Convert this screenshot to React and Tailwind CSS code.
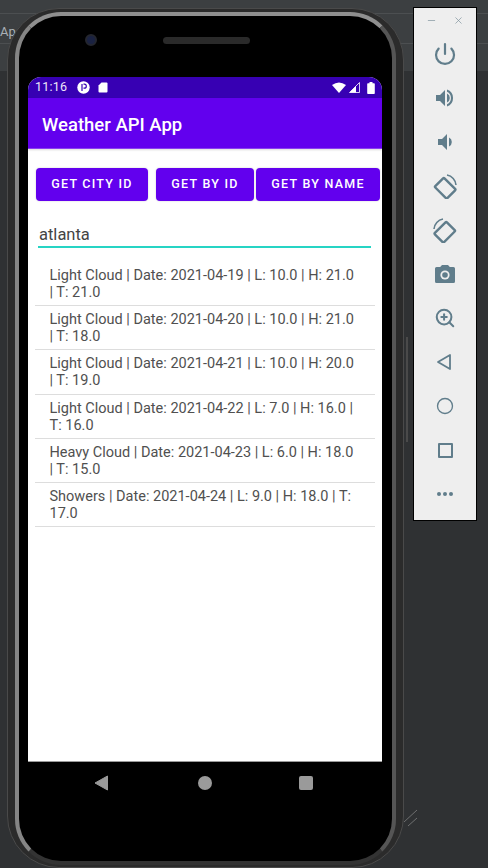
import { Power, Circle, ZoomIn, Minus, X } from 'lucide-react';

const forecast = [
  'Light Cloud | Date: 2021-04-19 | L: 10.0 | H: 21.0 | T: 21.0',
  'Light Cloud | Date: 2021-04-20 | L: 10.0 | H: 21.0 | T: 18.0',
  'Light Cloud | Date: 2021-04-21 | L: 10.0 | H: 20.0 | T: 19.0',
  'Light Cloud | Date: 2021-04-22 | L: 7.0 | H: 16.0 | T: 16.0',
  'Heavy Cloud | Date: 2021-04-23 | L: 6.0 | H: 18.0 | T: 15.0',
  'Showers | Date: 2021-04-24 | L: 9.0 | H: 18.0 | T: 17.0',
];

function RotateIcon({ flip }) {
  return (
    <svg width="26" height="26" viewBox="0 0 26 26" fill="none" stroke="#607d8b" className={flip ? '-scale-x-100' : ''}>
      <rect x="6" y="7" width="13" height="17" rx="1" strokeWidth="2.4" transform="rotate(-45 12.5 14.5)" />
      <path d="M15 2 A11 11 0 0 1 24 12" strokeWidth="1.6" />
    </svg>
  );
}

function ToolBar() {
  const icon = 'text-[#607d8b]';
  return (
    <div className="absolute left-[413px] top-[7px] w-[64px] h-[514px] bg-[#eeeeee] border border-black flex flex-col items-center">
      <div className="flex items-center justify-center gap-[16px] h-[24px] text-[#7d929c]">
        <Minus size={11} strokeWidth={1.5} />
        <X size={11} strokeWidth={1.5} />
      </div>
      <div className="flex flex-col items-center">
        <div className="h-[44px] w-full flex items-center justify-center"><Power size={24} strokeWidth={2.2} className={icon} /></div>
        <div className="h-[44px] w-full flex items-center justify-center">
          <svg width="24" height="24" viewBox="0 0 24 24" fill="#607d8b"><path d="M3 9v6h4l5 5V4L7 9H3z" /><path d="M14 7.5a5 5 0 0 1 0 9z" /><path d="M14 3.5v2.2a7 7 0 0 1 0 12.6v2.2a9 9 0 0 0 0-17z" /></svg>
        </div>
        <div className="h-[44px] w-full flex items-center justify-center">
          <svg width="24" height="24" viewBox="0 0 24 24" fill="#607d8b"><path d="M5 9v6h4l5 5V4L9 9H5z" /><path d="M16 7.5a5 5 0 0 1 0 9z" /></svg>
        </div>
        <div className="h-[44px] w-full flex items-center justify-center"><RotateIcon /></div>
        <div className="h-[44px] w-full flex items-center justify-center"><RotateIcon flip /></div>
        <div className="h-[44px] w-full flex items-center justify-center">
          <svg width="24" height="24" viewBox="0 0 24 24"><path fill="#607d8b" d="M9 3 7.2 5H3.500A1.500 1.500 0 0 0 2 6.500v13A1.500 1.500 0 0 0 3.500 21h17a1.500 1.500 0 0 0 1.500-1.500v-13A1.500 1.500 0 0 0 20.500 5h-3.700L15 3H9z" /><circle cx="12" cy="13" r="4.600" fill="#eeeeee" /><circle cx="12" cy="13" r="2.800" fill="#607d8b" /></svg>
        </div>
        <div className="h-[44px] w-full flex items-center justify-center"><ZoomIn size={22} strokeWidth={2.2} className={icon} /></div>
        <div className="h-[44px] w-full flex items-center justify-center">
          <svg width="20" height="20" viewBox="0 0 20 20" fill="none" stroke="#607d8b" strokeWidth="1.800" strokeLinejoin="round"><path d="M15 3v14L3 10z" /></svg>
        </div>
        <div className="h-[44px] w-full flex items-center justify-center"><Circle size={18} strokeWidth={1.800} className={icon} /></div>
        <div className="h-[44px] w-full flex items-center justify-center">
          <div className="w-[15px] h-[15px] border-2 border-[#607d8b] rounded-[1px]" />
        </div>
        <div className="h-[44px] w-full flex items-center justify-center gap-[2px]">
          <span className="w-[4px] h-[4px] rounded-full bg-[#607d8b]" />
          <span className="w-[4px] h-[4px] rounded-full bg-[#607d8b]" />
          <span className="w-[4px] h-[4px] rounded-full bg-[#607d8b]" />
        </div>
      </div>
    </div>
  );
}

function StatusBar() {
  return (
    <div className="h-[21px] bg-[#3700b3] flex items-center pl-[7px] pr-[7px] text-white">
      <span className="w-[31px] text-[12.500px] tracking-[0.2px] text-[#eee6fa] whitespace-nowrap">11:16</span>
      <svg width="13" height="13" viewBox="0 0 13 13" className="ml-[11px]">
        <circle cx="6.500" cy="6.500" r="6.200" fill="white" />
        <path d="M5 3v7M6.500 3.200h.8a2 2 0 0 1 0 4H6.500" fill="none" stroke="#3700b3" strokeWidth="1.200" />
      </svg>
      <svg width="10" height="11" viewBox="0 0 10 11" className="ml-[8px]">
        <path d="M3.500 0.500H8.500A1 1 0 0 1 9.500 1.500V9.500A1 1 0 0 1 8.500 10.500H1.500A1 1 0 0 1 0.500 9.500V3.500z" fill="white" />
      </svg>
      <div className="ml-auto flex items-center gap-[2px]">
        <svg width="14" height="11" viewBox="0 0 14 11"><path d="M0 3 Q7 -2 14 3 L7 11z" fill="white" /></svg>
        <svg width="11" height="11" viewBox="0 0 11 11" className="ml-[1px]">
          <path d="M0.500 10.500 10.500 0.500V10.500z" fill="none" stroke="white" strokeWidth="0.800" />
          <path d="M0.500 10.500 7 4V10.500z" fill="white" />
        </svg>
        <svg width="8" height="12" viewBox="0 0 8 12" className="ml-[5px]"><path d="M2.500 0h3v1.200H7a.8.8 0 0 1 .8.8v9.200a.8.8 0 0 1-.8.8H1a.8.8 0 0 1-.8-.8V2a.8.8 0 0 1 .8-.8h1.500z" fill="white" /></svg>
      </div>
    </div>
  );
}

function ActionButton({ className, children }) {
  return (
    <button className={`h-[33px] rounded-[4px] bg-[#6200ee] text-white text-[12.500px] font-medium tracking-[1.250px] flex items-center justify-center shadow-[0_0_2px_rgba(0,0,0,0.2)] ${className}`}>
      {children}
    </button>
  );
}

function Screen() {
  return (
    <div className="h-[685px] bg-white rounded-t-[13px] overflow-hidden flex flex-col border-b border-[#9a9a9a]">
      <StatusBar />
      <div className="h-[51px] bg-[#6200ee] flex items-center pl-[14px] pt-[5px] border-b border-[#8a3ff0] shadow-[0_1px_2px_rgba(0,0,0,0.15)]">
        <span className="text-white text-[18.500px] font-medium">Weather API App</span>
      </div>
      <div className="flex mt-[19px] pl-[8px]">
        <ActionButton className="w-[112px]">GET CITY ID</ActionButton>
        <ActionButton className="w-[98px] ml-[8px]">GET BY ID</ActionButton>
        <ActionButton className="w-[124px] ml-[2px]">GET BY NAME</ActionButton>
      </div>
      <div className="mt-[22px] ml-[10px] w-[333px] h-[25px] border-b-2 border-[#26d4c4] pl-[1px] text-[16.500px] text-[#444444] leading-[24px]">atlanta</div>
      <div className="mt-[14px] mx-[7px] flex flex-col">
        {forecast.map((row) => (
          <div key={row} className="h-[44.200px] border-b border-[#dddddd] pl-[14.500px] pr-[18px] pt-[5px] text-[14.500px] leading-[17px] text-[#505050]">
            {row}
          </div>
        ))}
      </div>
    </div>
  );
}

export default function App() {
  return (
    <div className="relative w-[488px] h-[868px] overflow-hidden bg-[#2f3133] [font-family:Roboto,sans-serif]">
      <div className="h-[43px] bg-[#3c3f41]">
        <div className="h-[14px] border-b border-[#4c4f51]" />
        <div className="pt-[8px] text-[13px] text-[#a9b0b5]">Ap</div>
      </div>
      <div className="h-[28px] bg-[#3c3f41] border-t border-[#4c4f51]" />

      {/* phone body */}
      <div className="absolute left-[7px] top-[8px] w-[397px] h-[860px] rounded-[52px] bg-[#2b2b2b] border border-[#4a4a4a] pl-[7px] pr-[7px] pt-[3px] pb-[2px]">
        <div className="h-full rounded-[46px] border-4 border-l-[#858585] border-r-[#555555] border-t-[#8f8f8f] border-b-[#333333] bg-black">
          <div className="relative h-[61px]">
            <span className="absolute left-[66px] top-[18px] w-[12px] h-[12px] rounded-full bg-[#1a2242] border-2 border-[#24262e]" />
            <span className="absolute left-[144px] top-[21px] w-[87px] h-[7px] rounded-full bg-[#2a2a2a]" />
          </div>
          <div className="ml-[9px] mr-[10px]">
            <Screen />
          </div>
          <div className="h-[40px] flex items-center pl-[75px] pt-[2px]">
            <svg width="14" height="16" viewBox="0 0 14 16"><path d="M13.500 1v14L1 8z" fill="#9a9a9a" stroke="#9a9a9a" strokeLinejoin="round" /></svg>
            <span className="ml-[90px] w-[14px] h-[14px] rounded-full bg-[#9a9a9a]" />
            <span className="ml-[87px] w-[14px] h-[14px] rounded-[2px] bg-[#9a9a9a]" />
          </div>
        </div>
      </div>

      {/* side button edge */}
      <span className="absolute left-[406px] top-[337px] w-[2px] h-[105px] bg-[#4a4a4a]" />

      {/* resize grip */}
      <svg width="16" height="20" viewBox="0 0 16 20" className="absolute left-[403px] top-[809px]" stroke="#8a8a8a" strokeWidth="0.700">
        <path d="M1 13 14 1M5 17 14 9" />
      </svg>

      <ToolBar />
    </div>
  );
}
